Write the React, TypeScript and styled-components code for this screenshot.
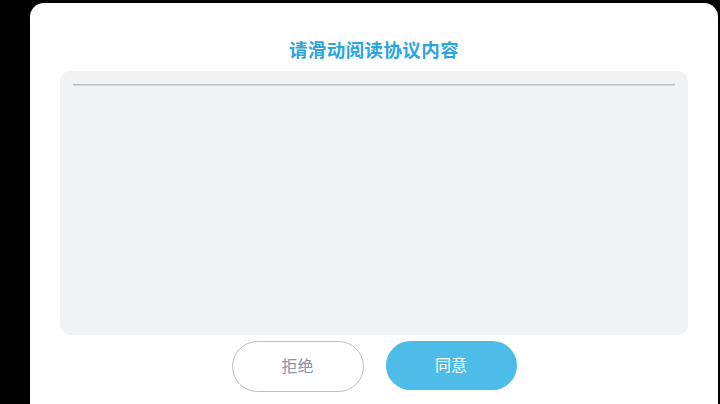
import styled, { createGlobalStyle } from "styled-components";

const GlobalStyle = createGlobalStyle`
  html, body {
    margin: 0;
    padding: 0;
    background: #000;
    height: 100%;
    overflow: hidden;
  }
  body {
    font-family: "Noto Sans CJK SC", "Noto Sans", sans-serif;
  }
`;

export default function App() {
  return (
    <>
      <GlobalStyle />
      <Screen>
        <Dialog>
          <Title>请滑动阅读协议内容</Title>
          <ContentBox>
            <Divider />
          </ContentBox>
          <Actions>
            <RejectButton>拒绝</RejectButton>
            <AgreeButton>同意</AgreeButton>
          </Actions>
        </Dialog>
      </Screen>
    </>
  );
}

const Screen = styled.div`
  width: 720px;
  height: 404px;
  padding: 3px 2px 0 30px;
  box-sizing: border-box;
  display: flex;
`;

const Dialog = styled.div`
  flex: 1;
  background: #fff;
  border-radius: 14px 14px 0 0;
  display: flex;
  flex-direction: column;
  align-items: center;
  padding: 33px 30px 0 30px;
`;

const Title = styled.h1`
  margin: 0;
  font-size: 18.5px;
  line-height: 26px;
  font-weight: 700;
  color: #2aa5de;
  letter-spacing: 0.4px;
`;

const ContentBox = styled.div`
  margin-top: 9px;
  align-self: stretch;
  height: 264px;
  background: #f1f2f4;
  border-radius: 10px;
  padding: 13px 13px 0 13px;
  box-sizing: border-box;
`;

const Divider = styled.div`
  height: 1px;
  background: #b9bbbe;
  box-shadow: 0 1px 0 #d6d8db;
`;

const Actions = styled.div`
  margin-top: 6px;
  display: flex;
  align-items: flex-start;
  gap: 22px;
`;

const BaseButton = styled.button`
  width: 132px;
  border-radius: 26px;
  padding: 0 0 3px 0;
  font-family: "Noto Sans CJK SC", sans-serif;
  font-size: 16px;
  cursor: pointer;
  box-sizing: border-box;
`;

const RejectButton = styled(BaseButton)`
  height: 51px;
  background: #fff;
  border: 1.5px solid #b7bfcc;
  color: #8b94a3;
`;

const AgreeButton = styled(BaseButton)`
  height: 49px;
  width: 131px;
  background: #4ebce9;
  border: none;
  color: #fff;
`;
